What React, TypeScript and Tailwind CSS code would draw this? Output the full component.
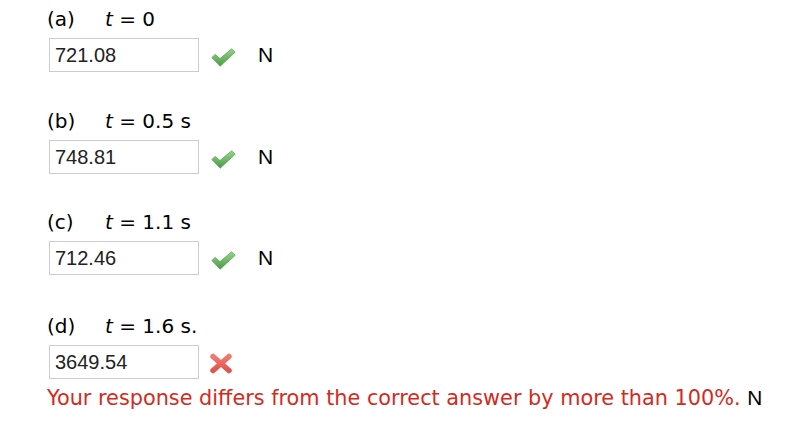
import React from "react";

const Check = () => (
  <svg width="25" height="19" viewBox="0 0 25 19" className="block">
    <defs>
      <linearGradient id="g" x1="0" y1="0" x2="0" y2="1">
        <stop offset="0" stopColor="#97d58f" />
        <stop offset="1" stopColor="#4a9a44" />
      </linearGradient>
    </defs>
    <path
      d="M0.8 9.6 L4.2 6.4 L9 10.6 L20.6 0.8 L24.2 4.2 L9.2 18.2 Z"
      fill="url(#g)"
      stroke="#5ea857"
      strokeWidth="0.8"
      strokeLinejoin="round"
    />
  </svg>
);

const Cross = () => (
  <svg width="24" height="21" viewBox="0 0 24 21" className="block">
    <defs>
      <linearGradient id="r" x1="0" y1="0" x2="0" y2="1">
        <stop offset="0" stopColor="#f07a72" />
        <stop offset="1" stopColor="#e0544f" />
      </linearGradient>
    </defs>
    <path d="M4 3.5 L20 17.5 M20 3.5 L4 17.5" stroke="url(#r)" strokeWidth="5.5" strokeLinecap="round" />
  </svg>
);

type Row = { label: string; t: string; value: string; ok: boolean; gap: string };

const rows: Row[] = [
  { label: "(a)", t: "= 0", value: "721.08", ok: true, gap: "" },
  { label: "(b)", t: "= 0.5 s", value: "748.81", ok: true, gap: "mt-[37px]" },
  { label: "(c)", t: "= 1.1 s", value: "712.46", ok: true, gap: "mt-[36px]" },
  { label: "(d)", t: "= 1.6 s.", value: "3649.54", ok: false, gap: "mt-[39px]" },
];

const verdana = { fontFamily: "'DejaVu Sans', Verdana, sans-serif" };
const arial = { fontFamily: "'Liberation Sans', Arial, sans-serif" };

export default function App() {
  return (
    <div className="w-[800px] h-[424px] bg-white overflow-hidden pl-[47px] pt-[7px]">
      {rows.map((r, i) => (
        <div key={i} className={r.gap}>
          <div className="text-[20px] leading-[24px] text-black flex" style={verdana}>
            <span className="w-[58px]">{r.label}</span>
            <span>
              <i>t</i> {r.t}
            </span>
          </div>
          <div className="flex items-center mt-[7px]">
            <div
              className="ml-[2px] w-[150px] h-[34px] border border-[#cccccc] flex items-center pl-[5px] text-[20px] text-[#222]"
              style={arial}
            >
              {r.value}
            </div>
            {r.ok ? (
              <>
                <div className="ml-[12px] mt-[5px]">
                  <Check />
                </div>
                <span className="ml-[22px] text-[21px] text-black" style={arial}>
                  N
                </span>
              </>
            ) : (
              <div className="ml-[10px] mt-[3px]">
                <Cross />
              </div>
            )}
          </div>
          {!r.ok && (
            <div className="mt-[7px] text-[20.8px] leading-[24px]" style={verdana}>
              <span className="text-[#d42a20]">Your response differs from the correct answer by more than 100%.</span>{" "}
              <span className="text-black" style={arial}>
                N
              </span>
            </div>
          )}
        </div>
      ))}
    </div>
  );
}
